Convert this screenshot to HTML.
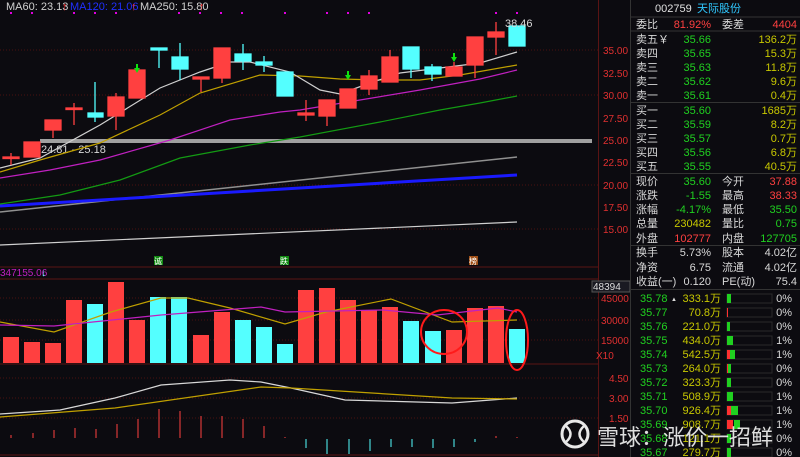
<!DOCTYPE html>
<html><head><meta charset="utf-8"><style>
html,body{margin:0;padding:0;background:#0c0b10;width:800px;height:457px;overflow:hidden}
svg{font-family:"Liberation Sans","Noto Sans CJK SC",sans-serif}
</style></head><body>
<svg width="800" height="457" viewBox="0 0 800 457" xmlns="http://www.w3.org/2000/svg" font-size="11">
<rect width="800" height="457" fill="#0c0b10"/>
<g stroke="#4a1010" stroke-width="1" stroke-dasharray="1,2">
<line x1="0" y1="50" x2="598" y2="50"/><line x1="0" y1="95" x2="598" y2="95"/>
<line x1="0" y1="185" x2="598" y2="185"/><line x1="0" y1="229" x2="598" y2="229"/>
<line x1="0" y1="298" x2="598" y2="298"/><line x1="0" y1="320" x2="598" y2="320"/><line x1="0" y1="340" x2="598" y2="340"/>
<line x1="0" y1="378" x2="598" y2="378"/><line x1="0" y1="398" x2="598" y2="398"/><line x1="0" y1="418" x2="598" y2="418"/>
</g>
<g stroke="#5a1414" stroke-width="1">
<line x1="0" y1="267" x2="598" y2="267"/><line x1="0" y1="279" x2="598" y2="279"/><line x1="0" y1="364" x2="598" y2="364"/><line x1="0" y1="455" x2="598" y2="455"/>
<line x1="598.5" y1="0" x2="598.5" y2="457"/>
</g>
<text x="6" y="10" fill="#d0d0d0">MA60: 23.13</text><text x="62" y="10" fill="#ff3030">↑</text>
<text x="70" y="10" fill="#2030ff">MA120: 21.06</text><text x="131" y="10" fill="#ff3030">↑</text>
<text x="140" y="10" fill="#d0d0d0">MA250: 15.80</text><text x="199" y="10" fill="#ff3030">↑</text>
<g fill="#e000e0"><rect x="10" y="12" width="2" height="2"/><rect x="31" y="12" width="2" height="2"/><rect x="73" y="12" width="2" height="2"/><rect x="94" y="12" width="2" height="2"/><rect x="115" y="12" width="2" height="2"/><rect x="178" y="12" width="2" height="2"/><rect x="199" y="12" width="2" height="2"/><rect x="220" y="12" width="2" height="2"/><rect x="241" y="12" width="2" height="2"/><rect x="284" y="12" width="2" height="2"/><rect x="326" y="12" width="2" height="2"/><rect x="347" y="12" width="2" height="2"/><rect x="368" y="12" width="2" height="2"/><rect x="495" y="12" width="2" height="2"/><rect x="516" y="12" width="2" height="2"/></g>
<rect x="40" y="139" width="552" height="4" fill="#a0a0a0"/>
<text x="41" y="153" fill="#d8d8d8">24.81 - 25.18</text>
<polyline points="0,212 517,157" fill="none" stroke="#909090" stroke-width="1.5"/>
<polyline points="0,206 517,175" fill="none" stroke="#1a1aff" stroke-width="3"/>
<polyline points="0,245 517,222" fill="none" stroke="#d0d0d0" stroke-width="1.2"/>
<polyline points="0,204 60,195 120,180 180,158 250,145 300,137 380,122 440,110 480,103 517,96" fill="none" stroke="#139a13" stroke-width="1.2"/>
<polyline points="0,178 50,170 100,160 170,140 230,120 280,112 300,110 360,100 420,90 480,79 517,70" fill="none" stroke="#c020c0" stroke-width="1.2"/>
<polyline points="0,172 40,160 100,143 160,115 200,93 260,75 300,76 340,79 380,80 420,80 460,75 517,65" fill="none" stroke="#c0a000" stroke-width="1.2"/>
<polyline points="0,168 40,158 100,125 160,88 200,72 230,62 250,62 290,72 320,90 340,94 370,83 400,73 440,68 480,63 517,52" fill="none" stroke="#d0d0d0" stroke-width="1.2"/>
<g stroke-width="1.3">
<g stroke="#ff4040" fill="#ff4040">
<line x1="11" y1="153" x2="11" y2="165"/><rect x="3" y="157" width="16" height="1.5"/>
<rect x="24" y="142" width="16" height="15"/>
<line x1="53" y1="120" x2="53" y2="138"/><rect x="45" y="120" width="16" height="10"/>
<line x1="74" y1="103" x2="74" y2="125"/><rect x="66" y="108" width="16" height="1.5"/>
<line x1="116" y1="93" x2="116" y2="130"/><rect x="108" y="97" width="16" height="19"/>
<rect x="129" y="70" width="16" height="28"/>
<line x1="201" y1="77" x2="201" y2="92"/><rect x="193" y="77" width="16" height="2"/>
<line x1="222" y1="48" x2="222" y2="83"/><rect x="214" y="48" width="16" height="30"/>
<line x1="306" y1="100" x2="306" y2="121"/><rect x="298" y="113" width="16" height="2"/>
<line x1="327" y1="100" x2="327" y2="126"/><rect x="319" y="100" width="16" height="16"/>
<rect x="340" y="89" width="16" height="19"/>
<line x1="369" y1="70" x2="369" y2="95"/><rect x="361" y="76" width="16" height="13"/>
<line x1="390" y1="50" x2="390" y2="82"/><rect x="382" y="57" width="16" height="25"/>
<line x1="454" y1="62" x2="454" y2="76"/><rect x="446" y="67" width="16" height="9"/>
<line x1="475" y1="37" x2="475" y2="78"/><rect x="467" y="37" width="16" height="28"/>
<line x1="496" y1="22" x2="496" y2="55"/><rect x="488" y="32" width="16" height="5"/>
</g>
<g stroke="#54ffff" fill="#54ffff">
<line x1="95" y1="82" x2="95" y2="122"/><rect x="88" y="113" width="15" height="4"/>
<line x1="159" y1="48" x2="159" y2="68"/><rect x="151" y="48" width="16" height="2"/>
<line x1="180" y1="43" x2="180" y2="80"/><rect x="172" y="57" width="16" height="12"/>
<line x1="243" y1="44" x2="243" y2="70"/><rect x="235" y="54" width="16" height="7"/>
<line x1="264" y1="56" x2="264" y2="72"/><rect x="256" y="62" width="16" height="3"/>
<rect x="277" y="72" width="16" height="24"/>
<line x1="411" y1="47" x2="411" y2="78"/><rect x="403" y="47" width="16" height="22"/>
<line x1="432" y1="64" x2="432" y2="81"/><rect x="425" y="67" width="16" height="7"/>
<rect x="509" y="26" width="16" height="20"/>
</g>
</g>
<g fill="#10e010"><path d="M134,68h6l-3,5z"/><rect x="136" y="64" width="2" height="5"/><path d="M345,75h6l-3,5z"/><rect x="347" y="71" width="2" height="5"/><path d="M451,57h6l-3,5z"/><rect x="453" y="53" width="2" height="5"/></g>
<text x="505" y="27" fill="#d8d8d8">38.46</text>
<rect x="154" y="256" width="9" height="9" fill="#128a12"/><text x="154" y="264" fill="#fff" font-size="8">诚</text>
<rect x="280" y="256" width="9" height="9" fill="#128a12"/><text x="280" y="264" fill="#fff" font-size="8">跌</text>
<rect x="469" y="256" width="9" height="9" fill="#a05018"/><text x="469" y="264" fill="#fff" font-size="8">榜</text>
<text x="0" y="276" fill="#c020c0" font-size="10">347155.06</text><text x="41" y="276" fill="#54ffff" font-size="10">↓</text>
<g fill="#ff4040">
<rect x="3" y="337" width="16" height="26"/><rect x="24" y="342" width="16" height="21"/><rect x="45" y="343" width="16" height="20"/><rect x="66" y="300" width="16" height="63"/><rect x="108" y="282" width="16" height="81"/><rect x="129" y="320" width="16" height="43"/><rect x="193" y="335" width="16" height="28"/><rect x="214" y="312" width="16" height="51"/><rect x="298" y="290" width="16" height="73"/><rect x="319" y="288" width="16" height="75"/><rect x="340" y="300" width="16" height="63"/><rect x="361" y="310" width="16" height="53"/><rect x="382" y="307" width="16" height="56"/><rect x="446" y="330" width="16" height="33"/><rect x="467" y="308" width="16" height="55"/><rect x="488" y="306" width="16" height="57"/>
</g>
<g fill="#54ffff">
<rect x="87" y="304" width="16" height="59"/><rect x="150" y="297" width="16" height="66"/><rect x="171" y="297" width="16" height="66"/><rect x="235" y="320" width="16" height="43"/><rect x="256" y="327" width="16" height="36"/><rect x="277" y="344" width="16" height="19"/><rect x="403" y="321" width="16" height="42"/><rect x="425" y="331" width="16" height="32"/><rect x="509" y="329" width="16" height="34"/>
</g>
<polyline points="0,322 54,332 111,312 161,298 188,298 230,308 285,324 326,312 391,299 452,322 517,320" fill="none" stroke="#c0a000" stroke-width="1.2"/>
<polyline points="0,325 54,326 161,315 261,307 285,312 383,310 437,315 498,308 517,312" fill="none" stroke="#c020c0" stroke-width="1.2"/>
<ellipse cx="444" cy="332" rx="23" ry="22" fill="none" stroke="#ff1a1a" stroke-width="2"/>
<ellipse cx="517" cy="340" rx="11" ry="30" fill="none" stroke="#ff1a1a" stroke-width="2"/>
<polyline points="0,414 60,410 115,398 161,385 230,380 261,382 291,388 345,400 452,403 517,398" fill="none" stroke="#d8d8d8" stroke-width="1.2"/>
<polyline points="0,417 115,408 261,387 291,388 452,398 517,399" fill="none" stroke="#c0a000" stroke-width="1.2"/>
<g stroke="#ff4040" stroke-width="1">
<line x1="11" y1="438" x2="11" y2="435"/><line x1="33" y1="438" x2="33" y2="433"/><line x1="54" y1="438" x2="54" y2="430"/><line x1="75" y1="438" x2="75" y2="428"/><line x1="96" y1="438" x2="96" y2="429"/><line x1="117" y1="438" x2="117" y2="424"/><line x1="138" y1="438" x2="138" y2="419"/><line x1="159" y1="438" x2="159" y2="409"/><line x1="180" y1="438" x2="180" y2="411"/><line x1="201" y1="438" x2="201" y2="416"/><line x1="222" y1="438" x2="222" y2="416"/><line x1="243" y1="438" x2="243" y2="419"/><line x1="264" y1="438" x2="264" y2="426"/><line x1="285" y1="438" x2="285" y2="437"/><line x1="496" y1="438" x2="496" y2="436"/><line x1="517" y1="438" x2="517" y2="437"/>
</g>
<g stroke="#54ffff" stroke-width="1">
<line x1="306" y1="439" x2="306" y2="448"/><line x1="327" y1="439" x2="327" y2="454"/><line x1="349" y1="439" x2="349" y2="454"/><line x1="370" y1="439" x2="370" y2="451"/><line x1="391" y1="439" x2="391" y2="447"/><line x1="412" y1="439" x2="412" y2="447"/><line x1="433" y1="439" x2="433" y2="448"/><line x1="454" y1="439" x2="454" y2="447"/><line x1="475" y1="439" x2="475" y2="442"/>
</g>
<g fill="#e03030" font-size="10">
<text x="603" y="54">35.00</text><text x="603" y="77">32.50</text><text x="603" y="99">30.00</text><text x="603" y="122">27.50</text><text x="603" y="144">25.00</text><text x="603" y="166">22.50</text><text x="603" y="189">20.00</text><text x="603" y="211">17.50</text><text x="603" y="233">15.00</text>
<text x="601" y="302">45000</text><text x="601" y="324">30000</text><text x="601" y="344">15000</text><text x="596" y="359">X10</text>
<text x="609" y="382">4.50</text><text x="609" y="402">3.00</text><text x="609" y="422">1.50</text>
</g>
<rect x="592" y="281" width="38" height="11" fill="#1a1a22" stroke="#555"/><text x="593" y="290" fill="#ddd" font-size="10">48394</text>
<g stroke="#333" stroke-width="1"><line x1="630" y1="17" x2="800" y2="17"/><line x1="630" y1="31" x2="800" y2="31"/><line x1="630" y1="102.5" x2="800" y2="102.5"/><line x1="630" y1="173.5" x2="800" y2="173.5"/><line x1="630" y1="245.5" x2="800" y2="245.5"/><line x1="630" y1="289.5" x2="800" y2="289.5"/><line x1="630.5" y1="0" x2="630.5" y2="457"/></g>
<text x="655" y="12" fill="#e0e0e0">002759</text><text x="697" y="12" fill="#30c8ff">天际股份</text>
<g fill="#d8d8d8"><text x="636" y="28">委比</text><text x="722" y="28">委差</text>
<text x="636" y="43">卖五￥</text><text x="636" y="57">卖四</text><text x="636" y="71">卖三</text><text x="636" y="85">卖二</text><text x="636" y="99">卖一</text>
<text x="636" y="114">买一</text><text x="636" y="128">买二</text><text x="636" y="142">买三</text><text x="636" y="156">买四</text><text x="636" y="170">买五</text>
<text x="636" y="185">现价</text><text x="636" y="199">涨跌</text><text x="636" y="213">涨幅</text><text x="636" y="227">总量</text><text x="636" y="242">外盘</text>
<text x="722" y="185">今开</text><text x="722" y="199">最高</text><text x="722" y="213">最低</text><text x="722" y="227">量比</text><text x="722" y="242">内盘</text>
<text x="636" y="256">换手</text><text x="636" y="271">净资</text><text x="636" y="285">收益(一)</text>
<text x="722" y="256">股本</text><text x="722" y="271">流通</text><text x="722" y="285">PE(动)</text>
<text x="711" y="256" text-anchor="end">5.73%</text><text x="711" y="271" text-anchor="end">6.75</text><text x="711" y="285" text-anchor="end">0.120</text>
<text x="797" y="256" text-anchor="end">4.02亿</text><text x="797" y="271" text-anchor="end">4.02亿</text><text x="797" y="285" text-anchor="end">75.4</text>
</g>
<g text-anchor="end">
<text x="711" y="28" fill="#ff4040">81.92%</text><text x="797" y="28" fill="#ff4040">4404</text>
<g fill="#20d020"><text x="711" y="43">35.66</text><text x="711" y="57">35.65</text><text x="711" y="71">35.63</text><text x="711" y="85">35.62</text><text x="711" y="99">35.61</text><text x="711" y="114">35.60</text><text x="711" y="128">35.59</text><text x="711" y="142">35.57</text><text x="711" y="156">35.56</text><text x="711" y="170">35.55</text>
<text x="711" y="185">35.60</text><text x="711" y="199">-1.55</text><text x="711" y="213">-4.17%</text><text x="797" y="213">35.50</text><text x="797" y="227">0.75</text><text x="797" y="242">127705</text></g>
<g fill="#c8c800"><text x="797" y="43">136.2万</text><text x="797" y="57">15.3万</text><text x="797" y="71">11.8万</text><text x="797" y="85">9.6万</text><text x="797" y="99">0.4万</text><text x="797" y="114">1685万</text><text x="797" y="128">8.2万</text><text x="797" y="142">0.7万</text><text x="797" y="156">6.8万</text><text x="797" y="170">40.5万</text><text x="711" y="227">230482</text></g>
<text x="797" y="185" fill="#ff4040">37.88</text><text x="797" y="199" fill="#ff4040">38.33</text><text x="711" y="242" fill="#ff4040">102777</text>
</g>
<g fill="#20d020"><text x="640" y="302">35.78</text><text x="640" y="316">35.77</text><text x="640" y="330">35.76</text><text x="640" y="344">35.75</text><text x="640" y="358">35.74</text><text x="640" y="372">35.73</text><text x="640" y="386">35.72</text><text x="640" y="400">35.71</text><text x="640" y="414">35.70</text><text x="640" y="428">35.69</text><text x="640" y="442">35.68</text><text x="640" y="456">35.67</text></g>
<text x="671" y="301" fill="#ddd" font-size="6">▲</text>
<g fill="#c8c800" text-anchor="end"><text x="721" y="302">333.1万</text><text x="721" y="316">70.8万</text><text x="721" y="330">221.0万</text><text x="721" y="344">434.0万</text><text x="721" y="358">542.5万</text><text x="721" y="372">264.0万</text><text x="721" y="386">323.3万</text><text x="721" y="400">508.9万</text><text x="721" y="414">926.4万</text><text x="721" y="428">908.7万</text><text x="721" y="442">121.1万</text><text x="721" y="456">279.7万</text></g>
<g fill="none" stroke="#2a2a2a"><rect x="727" y="294" width="45" height="9"/><rect x="727" y="308" width="45" height="9"/><rect x="727" y="322" width="45" height="9"/><rect x="727" y="336" width="45" height="9"/><rect x="727" y="350" width="45" height="9"/><rect x="727" y="364" width="45" height="9"/><rect x="727" y="378" width="45" height="9"/><rect x="727" y="392" width="45" height="9"/><rect x="727" y="406" width="45" height="9"/><rect x="727" y="420" width="45" height="9"/><rect x="727" y="434" width="45" height="9"/><rect x="727" y="448" width="45" height="9"/></g>
<g fill="#20d020"><rect x="727" y="294" width="4" height="9"/><rect x="727" y="322" width="3" height="9"/><rect x="727" y="336" width="6" height="9"/><rect x="730" y="350" width="5" height="9"/><rect x="728" y="364" width="3" height="9"/><rect x="727" y="378" width="4" height="9"/><rect x="727" y="392" width="6" height="9"/><rect x="731" y="406" width="7" height="9"/><rect x="734" y="420" width="6" height="9"/><rect x="727" y="434" width="4" height="9"/><rect x="727" y="448" width="4" height="9"/></g>
<g fill="#ff3030"><rect x="727" y="308" width="1" height="9"/><rect x="727" y="350" width="3" height="9"/><rect x="727" y="364" width="1" height="9"/><rect x="727" y="406" width="4" height="9"/><rect x="727" y="420" width="6" height="9"/></g>
<g fill="#d8d8d8" text-anchor="end"><text x="792" y="302">0%</text><text x="792" y="316">0%</text><text x="792" y="330">0%</text><text x="792" y="344">1%</text><text x="792" y="358">1%</text><text x="792" y="372">0%</text><text x="792" y="386">0%</text><text x="792" y="400">1%</text><text x="792" y="414">1%</text><text x="792" y="428">1%</text><text x="792" y="442">0%</text><text x="792" y="456">0%</text></g>
<circle cx="575" cy="434" r="13" fill="none" stroke="#e8e8e8" stroke-width="3"/>
<path d="M566,426 q9,8 0,16 M584,426 q-9,8 0,16" fill="none" stroke="#e8e8e8" stroke-width="2.5"/>
<text x="597" y="445" fill="#f0f0f0" font-size="22" opacity="0.92">雪球：涨价一招鲜</text>
</svg>
</body></html>
